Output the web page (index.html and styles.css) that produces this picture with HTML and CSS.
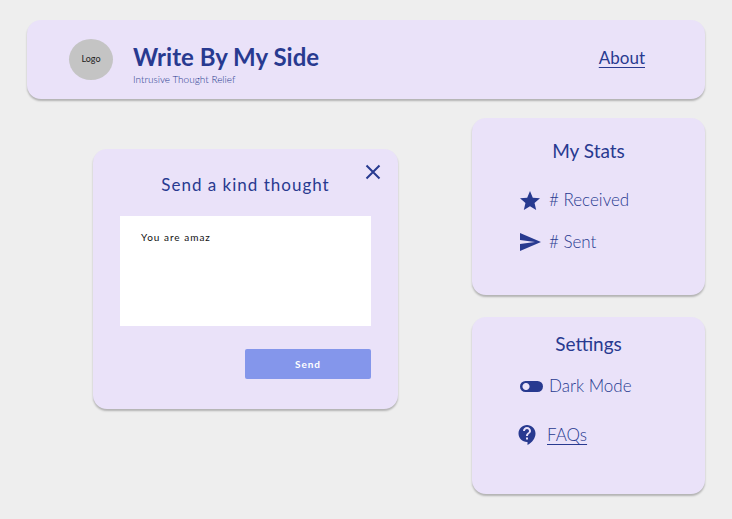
FILE: index.html
```html
<!DOCTYPE html>
<html lang="en">
<head>
  <meta charset="UTF-8">
  <meta name="viewport" content="width=device-width, initial-scale=1">
  <title>Write By My Side</title>
  <link rel="stylesheet" href="styles.css">
</head>
<body>

  <header class="card header">
    <div class="logo">Logo</div>
    <div class="brand">
      <h1>Write By My Side</h1>
      <p>Intrusive Thought Relief</p>
    </div>
    <a class="about" href="#about">About</a>
  </header>

  <div class="layout">
    <main>
      <form class="card compose">
        <button type="button" class="close" aria-label="Close">
          <svg viewBox="0 0 16 16" width="16" height="16"><path d="M1.5 1.5l13 13M14.5 1.5l-13 13" fill="none" stroke="currentColor" stroke-width="2"/></svg>
        </button>
        <h2><label for="thought">Send a kind thought</label></h2>
        <textarea id="thought" spellcheck="false">You are amaz</textarea>
        <button type="submit" class="send">Send</button>
      </form>
    </main>

    <aside>
      <section class="card panel stats">
        <h2>My Stats</h2>
        <ul>
          <li>
            <svg viewBox="2 2 20 19" width="20" height="19"><path d="M12 17.27L18.18 21l-1.64-7.03L22 9.24l-7.19-.61L12 2 9.19 8.63 2 9.24l5.46 4.73L5.82 21z"/></svg>
            <span># Received</span>
          </li>
          <li>
            <svg viewBox="2 3 21 18" width="21" height="18"><path d="M2.01 21L23 12 2.01 3 2 10l15 2-15 2z"/></svg>
            <span># Sent</span>
          </li>
        </ul>
      </section>

      <section class="card panel settings">
        <h2>Settings</h2>
        <ul>
          <li>
            <input type="checkbox" id="darkMode" class="toggle">
            <label for="darkMode">Dark Mode</label>
          </li>
          <li class="faqs">
            <svg viewBox="3 2 17 20" width="18" height="20"><path fill-rule="evenodd" d="M11.5 2C6.81 2 3 5.81 3 10.5S6.81 19 11.5 19h.5v3c4.86-2.34 8-7 8-11.5C20 5.81 16.19 2 11.5 2zm1 14.5h-2v-2h2v2zm0-3.5h-2c0-3.25 3-3 3-5 0-1.1-.9-2-2-2s-2 .9-2 2h-2c0-2.21 1.79-4 4-4s4 1.79 4 4c0 2.5-3 2.75-3 5z"/></svg>
            <a href="#faqs">FAQs</a>
          </li>
        </ul>
      </section>
    </aside>
  </div>

</body>
</html>
```
FILE: styles.css
```css
* {
  box-sizing: border-box;
}
body {
  margin: 0;
  padding: 20px 27px 24px;
  background: #eee;
  color: #283a90;
  font-family: Lato, "Liberation Sans", sans-serif;
}
h1, h2, p, ul {
  margin: 0;
  padding: 0;
}
h2 {
  font-size: 19px;
  line-height: 24px;
  font-weight: 400;
  text-align: center;
}
a {
  color: inherit;
  text-underline-offset: 3px;
  text-decoration-thickness: 1px;
}
button {
  border: 0;
  padding: 0;
  font-family: inherit;
  cursor: pointer;
}
svg {
  display: block;
  fill: currentColor;
}
.card {
  background: #eae2f9;
  border-radius: 14px;
  box-shadow: 0 2px 2px rgba(0,0,0,0.25);
}

/* header */
.header {
  display: flex;
  align-items: flex-start;
  padding: 19px 60px 14px 42px;
}
.logo {
  width: 44px;
  height: 41px;
  margin-right: 20px;
  border-radius: 50%;
  background: #c4c4c4;
  color: #222;
  font-size: 9px;
  line-height: 40px;
  text-align: center;
}
.brand {
  flex: 1;
  padding-top: 2px;
}
.brand h1 {
  font-size: 24px;
  line-height: 32px;
  font-weight: 700;
}
.brand p {
  font-size: 10px;
  line-height: 12px;
  font-weight: 300;
}
.about {
  font-size: 17px;
  line-height: 38px;
}

/* columns */
.layout {
  display: grid;
  grid-template-columns: 1fr 233px;
  gap: 8px;
  padding-top: 19px;
}
main {
  padding-top: 31px;
}
aside {
  display: flex;
  flex-direction: column;
  gap: 22px;
}

/* compose box */
.compose {
  position: relative;
  max-width: 305px;
  margin: 0 auto;
  padding: 24px 27px 30px;
}
.compose h2 {
  font-size: 17px;
  letter-spacing: 1px;
}
.close {
  position: absolute;
  top: 15px;
  right: 17px;
  background: none;
  color: inherit;
}
.compose textarea {
  display: block;
  width: 100%;
  height: 110px;
  margin: 19px 0 23px;
  padding: 14px 21px;
  border: 0;
  border-radius: 0;
  outline: 0;
  resize: none;
  background: #fff;
  color: #111;
  font-family: inherit;
  font-size: 10px;
  line-height: 15px;
  letter-spacing: 1px;
}
.send {
  display: block;
  width: 126px;
  height: 30px;
  margin-left: auto;
  border-radius: 2px;
  background: #8496eb;
  color: #fff;
  font-size: 10px;
  font-weight: 700;
  letter-spacing: 1px;
}

/* side panels */
.panel {
  min-height: 177px;
  padding: 21px 46px;
}
.panel ul {
  display: flex;
  flex-direction: column;
  gap: 18px;
  margin-top: 25px;
  list-style: none;
}
.panel li {
  display: grid;
  grid-template-columns: 25px 1fr;
  align-items: center;
  gap: 6px;
  font-size: 17px;
  line-height: 24px;
  font-weight: 300;
}
.panel li svg {
  margin-left: 2px;
}
.settings {
  padding-top: 15px;
}
.settings ul {
  gap: 25px;
  margin-top: 18px;
}
.panel .faqs {
  grid-template-columns: 23px 1fr;
}
.faqs a {
  justify-self: start;
}
.panel .faqs svg {
  margin-left: 0;
}
.toggle {
  appearance: none;
  width: 23px;
  height: 11px;
  margin: 0 0 0 2px;
  border-radius: 6px;
  background: radial-gradient(circle at 6px 50%, #eae2f9 3px, #283a90 4px);
  cursor: pointer;
}
.toggle:checked {
  background: radial-gradient(circle at 17px 50%, #eae2f9 3px, #283a90 4px);
}
```
